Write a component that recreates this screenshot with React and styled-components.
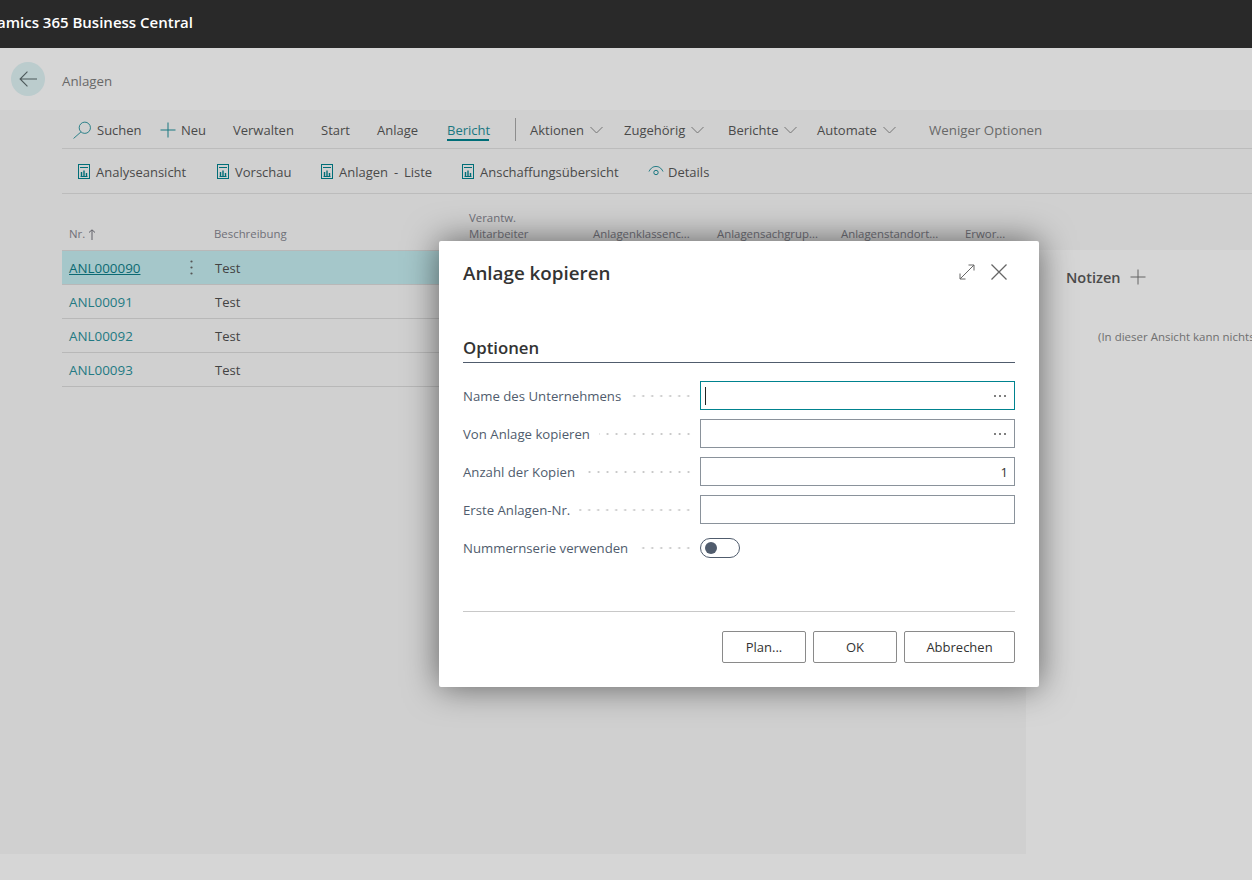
import React from 'react'
import styled, { createGlobalStyle } from 'styled-components'

const teal = '#00838f'
const fontStack = '"Open Sans", "Noto Sans", "Liberation Sans", sans-serif'

const GlobalStyle = createGlobalStyle`
  html, body { margin: 0; padding: 0; background: #fff; }
  body { font-family: ${fontStack}; color: #333; }
  * { box-sizing: border-box; }
`

const Page = styled.div`
  position: relative;
  width: 1252px;
  height: 880px;
  overflow: hidden;
  display: flex;
  flex-direction: column;
  background: #fff;
`

const TopBar = styled.header`
  position: relative;
  z-index: 3;
  height: 48px;
  flex: none;
  background: #292929;
  display: flex;
  align-items: center;
  padding-bottom: 4px;
`

const Brand = styled.div`
  width: 193px;
  display: flex;
  justify-content: flex-end;
  overflow: hidden;
  white-space: nowrap;
  color: #fff;
  font-size: 15px;
  font-weight: 600;
`

const PageHead = styled.div`
  height: 62px;
  flex: none;
  display: flex;
  align-items: center;
  padding-left: 11px;
`

const BackButton = styled.div`
  width: 34px;
  height: 34px;
  border-radius: 50%;
  background: #dff3f5;
  display: flex;
  align-items: center;
  justify-content: center;
`

const PageTitle = styled.div`
  margin: 4px 0 0 17px;
  font-size: 13.3px;
  color: #7d7d7d;
`

const Main = styled.main`
  height: 744px;
  flex: none;
  background: #f8f8f8;
  display: flex;
  flex-direction: column;
`

const ActionRow = styled.div`
  height: ${p => p.$h}px;
  margin-left: 62px;
  flex: none;
  display: flex;
  align-items: center;
  padding-left: ${p => p.$pad}px;
  border-bottom: 1px solid #e1e1e1;
`

const ActionItem = styled.div`
  position: relative;
  width: ${p => p.$w ? `${p.$w}px` : 'auto'};
  flex: none;
  display: flex;
  align-items: center;
  gap: ${p => p.$gap ?? 6}px;
  height: 100%;
  padding-top: 2px;
  font-size: ${p => p.$muted ? 13.3 : 13}px;
  word-spacing: ${p => p.$spread ?? 0}px;
  white-space: nowrap;
  color: ${p => p.$active ? '#1f8f9a' : p.$muted ? '#7d7d7d' : '#585858'};
`

const ActiveBar = styled.span`
  position: absolute;
  left: 0;
  width: 42px;
  bottom: 7px;
  height: 2px;
  background: ${teal};
`

const Divider = styled.span`
  width: 1px;
  height: 23px;
  margin: 0 14px 0 0;
  flex: none;
  background: #a8a8a8;
`

const Content = styled.div`
  flex: 1;
  display: flex;
  min-height: 0;
`

const ListArea = styled.section`
  width: 1026px;
  flex: none;
  padding-left: 62px;
`

const ColumnGrid = styled.div`
  display: grid;
  grid-template-columns: 152px 255px 124px 124px 124px 124px 61px;
`

const HeadRow = styled(ColumnGrid)`
  height: 57px;
  align-items: end;
  padding-bottom: 8px;
  border-bottom: 1px solid #dcdcdc;
`

const HeadCell = styled.div`
  display: flex;
  align-items: center;
  flex-wrap: wrap;
  gap: 3px;
  font-size: 11.4px;
  line-height: 16px;
  color: #868690;
  white-space: nowrap;
  padding-left: ${p => p.$pad ?? 0}px;
`

const Row = styled(ColumnGrid)`
  height: 34px;
  align-items: center;
  border-bottom: 1px solid #dcdcdc;
  background: ${p => p.$selected ? '#c5eef1' : 'transparent'};
`

const NrCell = styled.div`
  display: flex;
  align-items: center;
  justify-content: space-between;
  padding: 0 21px 0 7px;
`

const RecordLink = styled.a`
  font-size: 13.4px;
  color: ${p => p.$selected ? '#0f7f8a' : '#2a929c'};
  text-decoration: ${p => p.$selected ? 'underline' : 'none'};
`

const TextCell = styled.div`
  font-size: 13px;
  color: #505050;
  padding-left: 1px;
`

const NotesPanel = styled.aside`
  flex: 1;
  margin-top: 56px;
  background: #fff;
  padding: 15px 0 0 40px;
  overflow: hidden;
`

const NotesHead = styled.div`
  display: flex;
  align-items: center;
  gap: 9px;
  height: 24px;
  font-size: 14.5px;
  font-weight: 600;
  color: #5a5a5a;
`

const NotesEmpty = styled.div`
  margin: 40px 0 0 32px;
  font-size: 11.5px;
  color: #868686;
  white-space: nowrap;
`

const Scrim = styled.div`
  position: absolute;
  left: 0;
  right: 0;
  top: 48px;
  bottom: 0;
  z-index: 2;
  background: rgba(0, 0, 0, 0.16);
`

const Dialog = styled.div`
  position: absolute;
  left: 439px;
  top: 193px;
  width: 600px;
  height: 446px;
  padding: 0 24px;
  background: #fff;
  border-radius: 2px;
  box-shadow: 0 0 34px rgba(0, 0, 0, 0.55);
`

const DialogHead = styled.div`
  height: 64px;
  display: flex;
  align-items: center;
  justify-content: space-between;
`

const DialogTitle = styled.h2`
  margin: 0;
  font-size: 18.8px;
  line-height: 24px;
  font-weight: 600;
  color: #333;
`

const DialogTools = styled.div`
  display: flex;
  align-items: center;
  gap: 16px;
  margin: -2px 8px 0 0;
`

const SectionTitle = styled.h3`
  margin: 29px 0 0;
  height: 29px;
  font-size: 16.8px;
  line-height: 27px;
  font-weight: 600;
  color: #333;
  border-bottom: 1px solid #505c6d;
`

const Fields = styled.div`
  margin-top: 18px;
  display: flex;
  flex-direction: column;
  gap: 9px;
`

const Field = styled.div`
  display: flex;
  align-items: center;
  height: 29px;
`

const Label = styled.label`
  width: 237px;
  flex: none;
  display: flex;
  align-items: center;
  padding-right: 7px;
  font-size: 13.2px;
  color: #505c6d;
  white-space: nowrap;
`

const Leader = styled.span`
  flex: 1;
  height: 4px;
  margin-left: 9px;
  background-image: radial-gradient(circle at center, #c8c8c8 1px, transparent 1.2px);
  background-size: 9px 4px;
  background-position: right center;
  background-repeat: repeat-x;
`

const InputBox = styled.div`
  flex: 1;
  height: 29px;
  display: flex;
  align-items: center;
  justify-content: ${p => p.$right ? 'flex-end' : 'space-between'};
  padding: 0 6px 0 4px;
  border: 1px solid ${p => p.$focus ? teal : '#8a929b'};
  font-size: 13px;
  color: #333;
`

const Caret = styled.span`
  width: 1px;
  height: 18px;
  background: #222;
`

const Lookup = styled.span`
  margin: 0 2px 0 auto;
  display: flex;
  gap: 3px;
`

const LookupDot = styled.i`
  width: 2px;
  height: 2px;
  border-radius: 50%;
  background: #555;
`

const Toggle = styled.span`
  width: 40px;
  height: 20px;
  padding: 0 4px;
  display: flex;
  align-items: center;
  border: 1px solid #505c6d;
  border-radius: 10px;
`

const Knob = styled.span`
  width: 12px;
  height: 12px;
  border-radius: 50%;
  background: #505c6d;
`

const Footer = styled.div`
  margin-top: 49px;
  padding-top: 19px;
  border-top: 1px solid #c8c8c8;
  display: flex;
  justify-content: flex-end;
  gap: 7px;
`

const Button = styled.button`
  width: ${p => p.$w}px;
  height: 32px;
  padding: 0;
  background: #fff;
  border: 1px solid #8a8a8a;
  border-radius: 2px;
  font-family: ${fontStack};
  font-size: 13px;
  color: #333;
`

const Icon = ({ size = 16, children, stroke = '#1f8f9a', width = 1 }) => (
  <svg width={size} height={size} viewBox="0 0 16 16" fill="none" stroke={stroke} strokeWidth={width} style={{ flex: 'none' }}>
    {children}
  </svg>
)

const SearchIcon = () => (
  <Icon size={18} width={0.8}>
    <circle cx="10.500" cy="6" r="5" />
    <path d="M7 9.800 .5 15.500" />
  </Icon>
)

const PlusIcon = ({ stroke, size = 16 }) => (
  <Icon size={size} stroke={stroke}>
    <path d="M8 .5v15M.5 8h15" />
  </Icon>
)

const ReportIcon = () => (
  <svg width="13" height="16" viewBox="0 0 13 16" fill="none" stroke={teal} style={{ flex: 'none' }}>
    <rect x=".5" y=".5" width="11" height="14" />
    <path d="M2 3.500h8" />
    <path d="M3.500 12V8M6 12V6.500M8.500 12V9" strokeWidth="1.400" />
    <path d="M2.500 12.500h7" />
  </svg>
)

const EyeIcon = () => (
  <Icon size={16}>
    <path d="M1 7.500C3 3.500 5.500 2.500 8 2.500s5 1 7 5" />
    <circle cx="8" cy="8.500" r="2.200" />
  </Icon>
)

const Chevron = () => (
  <svg width="13" height="8" viewBox="0 0 13 8" fill="none" stroke="#8a8a8a" style={{ flex: 'none' }}>
    <path d="M.5 1 6.500 7l6-6" />
  </svg>
)

const BackArrow = () => (
  <Icon size={18} stroke="#5d6b6d">
    <path d="M16 8H1M7.500 1.500 1 8l6.500 6.500" />
  </Icon>
)

const ExpandIcon = () => (
  <Icon size={16} stroke="#666">
    <path d="M1 15 15 1M9.500 1H15v5.500M1 9.500V15h5.500" />
  </Icon>
)

const CloseIcon = () => (
  <Icon size={16} stroke="#666" width={1.300}>
    <path d="M.5.5l15 15M15.500.5l-15 15" />
  </Icon>
)

const SortArrow = () => (
  <svg width="8" height="11" viewBox="0 0 8 11" fill="none" stroke="#74747c" style={{ flex: 'none' }}>
    <path d="M4 11V1M1 3.500 4 .8l3 2.700" />
  </svg>
)

const MoreDots = () => (
  <svg width="3" height="15" viewBox="0 0 3 15" fill="#666" style={{ flex: 'none' }}>
    <circle cx="1.500" cy="1.500" r="1.100" />
    <circle cx="1.500" cy="7.500" r="1.100" />
    <circle cx="1.500" cy="13.500" r="1.100" />
  </svg>
)

const tabs = [
  { title: 'Verwalten', w: 88 },
  { title: 'Start', w: 56 },
  { title: 'Anlage', w: 70 },
]

const menus = [
  { title: 'Aktionen', w: 94 },
  { title: 'Zugehörig', w: 104 },
  { title: 'Berichte', w: 89 },
  { title: 'Automate', w: 112 },
]

const reports = [
  { title: 'Analyseansicht', w: 139 },
  { title: 'Vorschau', w: 104 },
  { title: 'Anlagen - Liste', w: 141, spread: 2.5 },
  { title: 'Anschaffungsübersicht', w: 186 },
]

const columns = ['Anlagenklassenc...', 'Anlagensachgrup...', 'Anlagenstandort...', 'Erwor...']

const records = ['ANL000090', 'ANL00091', 'ANL00092', 'ANL00093']

const fields = [
  { label: 'Name des Unternehmens', focus: true, lookup: true },
  { label: 'Von Anlage kopieren', lookup: true },
  { label: 'Anzahl der Kopien', value: '1' },
  { label: 'Erste Anlagen-Nr.' },
]

const App = () => (
  <Page>
    <GlobalStyle />
    <TopBar>
      <Brand>Dynamics 365 Business Central</Brand>
    </TopBar>

    <PageHead>
      <BackButton><BackArrow /></BackButton>
      <PageTitle>Anlagen</PageTitle>
    </PageHead>

    <Main>
      <ActionRow $h={39} $pad={11}>
        <ActionItem $w={87}><SearchIcon />Suchen</ActionItem>
        <ActionItem $w={73} $gap={5}><PlusIcon />Neu</ActionItem>
        {tabs.map(t => <ActionItem key={t.title} $w={t.w}>{t.title}</ActionItem>)}
        <ActionItem $w={68} $active>Bericht<ActiveBar /></ActionItem>
        <Divider />
        {menus.map(m => <ActionItem key={m.title} $w={m.w}>{m.title}<Chevron /></ActionItem>)}
        <ActionItem $muted>Weniger Optionen</ActionItem>
      </ActionRow>

      <ActionRow $h={45} $pad={16}>
        {reports.map(r => (
          <ActionItem key={r.title} $w={r.w} $gap={5} $spread={r.spread}><ReportIcon />{r.title}</ActionItem>
        ))}
        <ActionItem $gap={4}><EyeIcon />Details</ActionItem>
      </ActionRow>

      <Content>
        <ListArea>
          <HeadRow>
            <HeadCell $pad={7}>Nr. <SortArrow /></HeadCell>
            <HeadCell>Beschreibung</HeadCell>
            <HeadCell>Verantw.<br />Mitarbeiter</HeadCell>
            {columns.map(c => <HeadCell key={c}>{c}</HeadCell>)}
          </HeadRow>
          {records.map((nr, i) => (
            <Row key={nr} $selected={i === 0}>
              <NrCell>
                <RecordLink $selected={i === 0}>{nr}</RecordLink>
                {i === 0 && <MoreDots />}
              </NrCell>
              <TextCell>Test</TextCell>
            </Row>
          ))}
        </ListArea>
        <NotesPanel>
          <NotesHead>Notizen <PlusIcon stroke="#777" /></NotesHead>
          <NotesEmpty>(In dieser Ansicht kann nichts angezeigt werden.)</NotesEmpty>
        </NotesPanel>
      </Content>
    </Main>

    <Scrim>
      <Dialog>
        <DialogHead>
          <DialogTitle>Anlage kopieren</DialogTitle>
          <DialogTools>
            <ExpandIcon />
            <CloseIcon />
          </DialogTools>
        </DialogHead>

        <SectionTitle>Optionen</SectionTitle>

        <Fields>
          {fields.map(f => (
            <Field key={f.label}>
              <Label>{f.label}<Leader /></Label>
              <InputBox $focus={f.focus} $right={!!f.value}>
                {f.focus && <Caret />}
                {f.lookup && <Lookup><LookupDot /><LookupDot /><LookupDot /></Lookup>}
                {f.value}
              </InputBox>
            </Field>
          ))}
          <Field>
            <Label>Nummernserie verwenden<Leader /></Label>
            <Toggle><Knob /></Toggle>
          </Field>
        </Fields>

        <Footer>
          <Button $w={84}>Plan...</Button>
          <Button $w={84}>OK</Button>
          <Button $w={111}>Abbrechen</Button>
        </Footer>
      </Dialog>
    </Scrim>
  </Page>
)

export default App
